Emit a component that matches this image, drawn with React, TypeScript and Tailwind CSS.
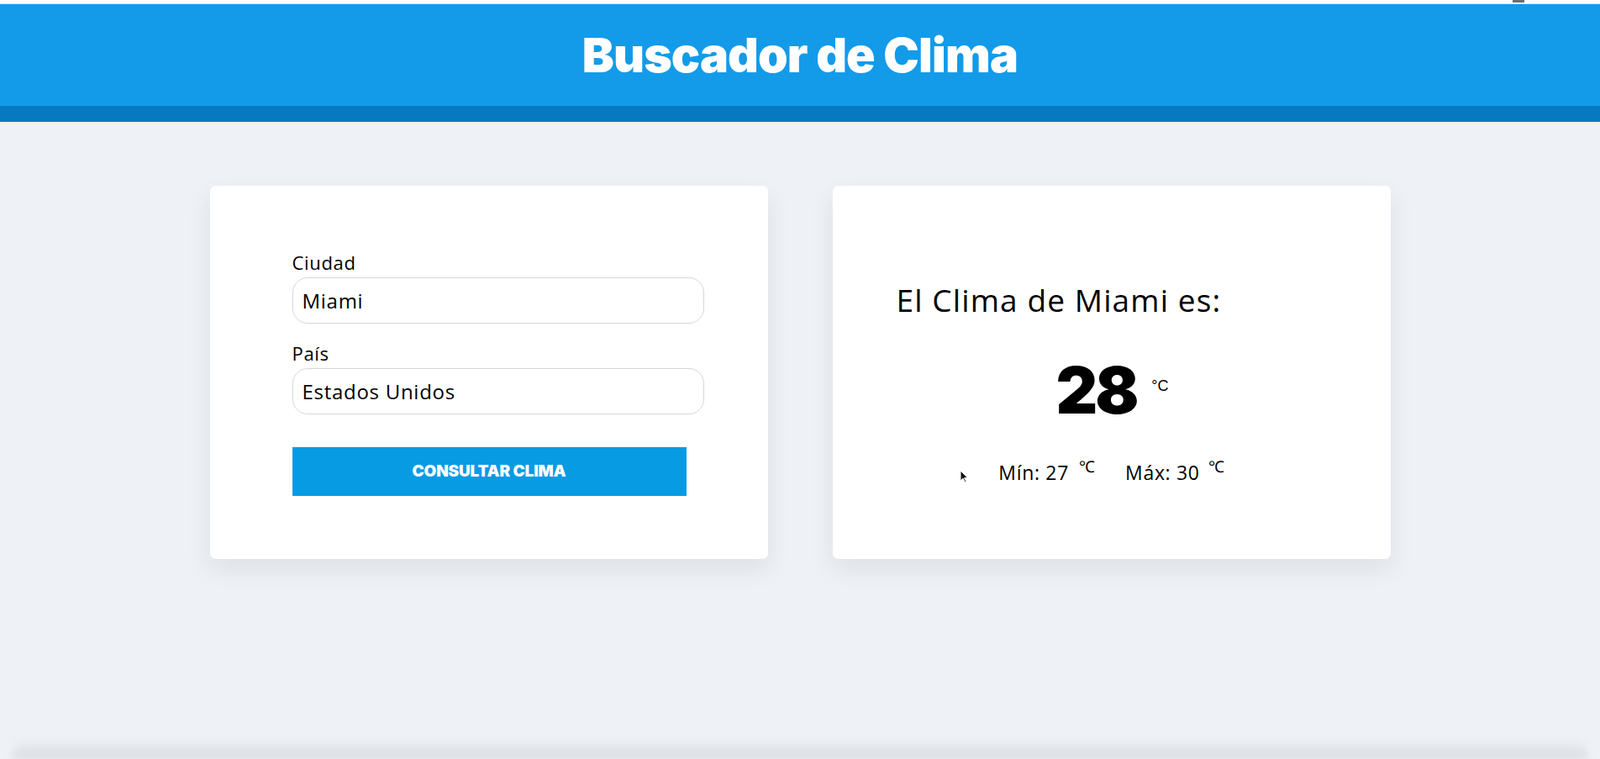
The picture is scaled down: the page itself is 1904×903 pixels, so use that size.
import { useState } from "react"

const bodyFont = { fontFamily: '"Open Sans", "Noto Sans", sans-serif' }

function Field({ label, value, onChange }: { label: string; value: string; onChange: (v: string) => void }) {
  return (
    <label className="block">
      <span className="block text-[22px] leading-[28px] tracking-[0.03em] text-black">{label}</span>
      <input
        value={value}
        onChange={(e) => onChange(e.target.value)}
        className="mt-[4px] block h-[55px] w-[490px] rounded-[18px] border border-[#d6d6d9] bg-white px-[11px] text-[24px] tracking-[0.03em] text-black outline-none"
      />
    </label>
  )
}

export default function App() {
  const [ciudad, setCiudad] = useState("Miami")
  const [pais, setPais] = useState("Estados Unidos")

  return (
    <div className="flex h-screen flex-col overflow-hidden bg-[#eef2f6]" style={bodyFont}>
      <div className="relative h-[5px] border-b border-[#cfe6f6] bg-white">
        <span className="absolute right-[90px] top-0 h-[3px] w-[14px] bg-[#6b6f75]" />
      </div>
      <header className="flex h-[121px] items-center justify-center bg-[#139be9]">
        <h1 className="font-['Inter',sans-serif] text-[57px] font-black tracking-[-0.015em] text-white">
          Buscador de Clima
        </h1>
      </header>
      <div className="h-[19px] bg-[#0779c1]" />

      <main className="flex flex-1 justify-center gap-[77px] pt-[76px]">
        <section className="h-[444px] w-[664px] rounded-[7px] bg-white pl-[98px] pt-[77px] shadow-[0_12px_30px_rgba(20,30,50,0.08)]">
          <Field label="Ciudad" value={ciudad} onChange={setCiudad} />
          <div className="mt-[21px]">
            <Field label="País" value={pais} onChange={setPais} />
          </div>
          <button className="mt-[39px] h-[58px] w-[469px] bg-[#079be3] font-['Inter',sans-serif] text-[19px] font-black uppercase tracking-[-0.01em] text-white">
            Consultar Clima
          </button>
        </section>

        <section className="h-[444px] w-[664px] rounded-[7px] bg-white px-[76px] pt-[114px] shadow-[0_12px_30px_rgba(20,30,50,0.08)]">
          <h2 className="text-[37px] leading-[44px] tracking-[0.03em] text-black">El Clima de Miami es:</h2>
          <div className="mt-[47px] flex items-start justify-center pl-[2px]">
            <span className="font-['Inter',sans-serif] text-[77px] font-black leading-none tracking-[-0.04em] text-black">
              28
            </span>
            <span className="ml-[18px] mt-[24px] font-['Liberation_Sans',sans-serif] text-[18px] leading-none text-black">
              °C
            </span>
          </div>
          <div className="mt-[44px] flex justify-center">
            <div className="relative flex items-start text-[23px] leading-[30px] tracking-[0.03em] text-black">
              <svg
                className="absolute left-[-46px] top-[12px]"
                width="11"
                height="16"
                viewBox="0 0 11 16"
              >
                <path d="M1 1 L1 13 L4 10 L6.5 15 L8 14.3 L5.6 9.5 L9.5 9.5 Z" fill="#111" stroke="#fff" strokeWidth="1" />
              </svg>
              <span>Mín: 27</span>
              <span className="ml-[12px] mt-[-6px] font-['Liberation_Serif',serif] text-[19px] tracking-normal">℃</span>
              <span className="ml-[36px]">Máx: 30</span>
              <span className="ml-[10px] mt-[-6px] font-['Liberation_Serif',serif] text-[19px] tracking-normal">℃</span>
            </div>
          </div>
        </section>
      </main>

      <div className="mx-[14px] h-[26px] rounded-t-[40px] bg-gradient-to-b from-[#eef2f6] to-[#d9dce1] blur-[4px]" />
    </div>
  )
}
